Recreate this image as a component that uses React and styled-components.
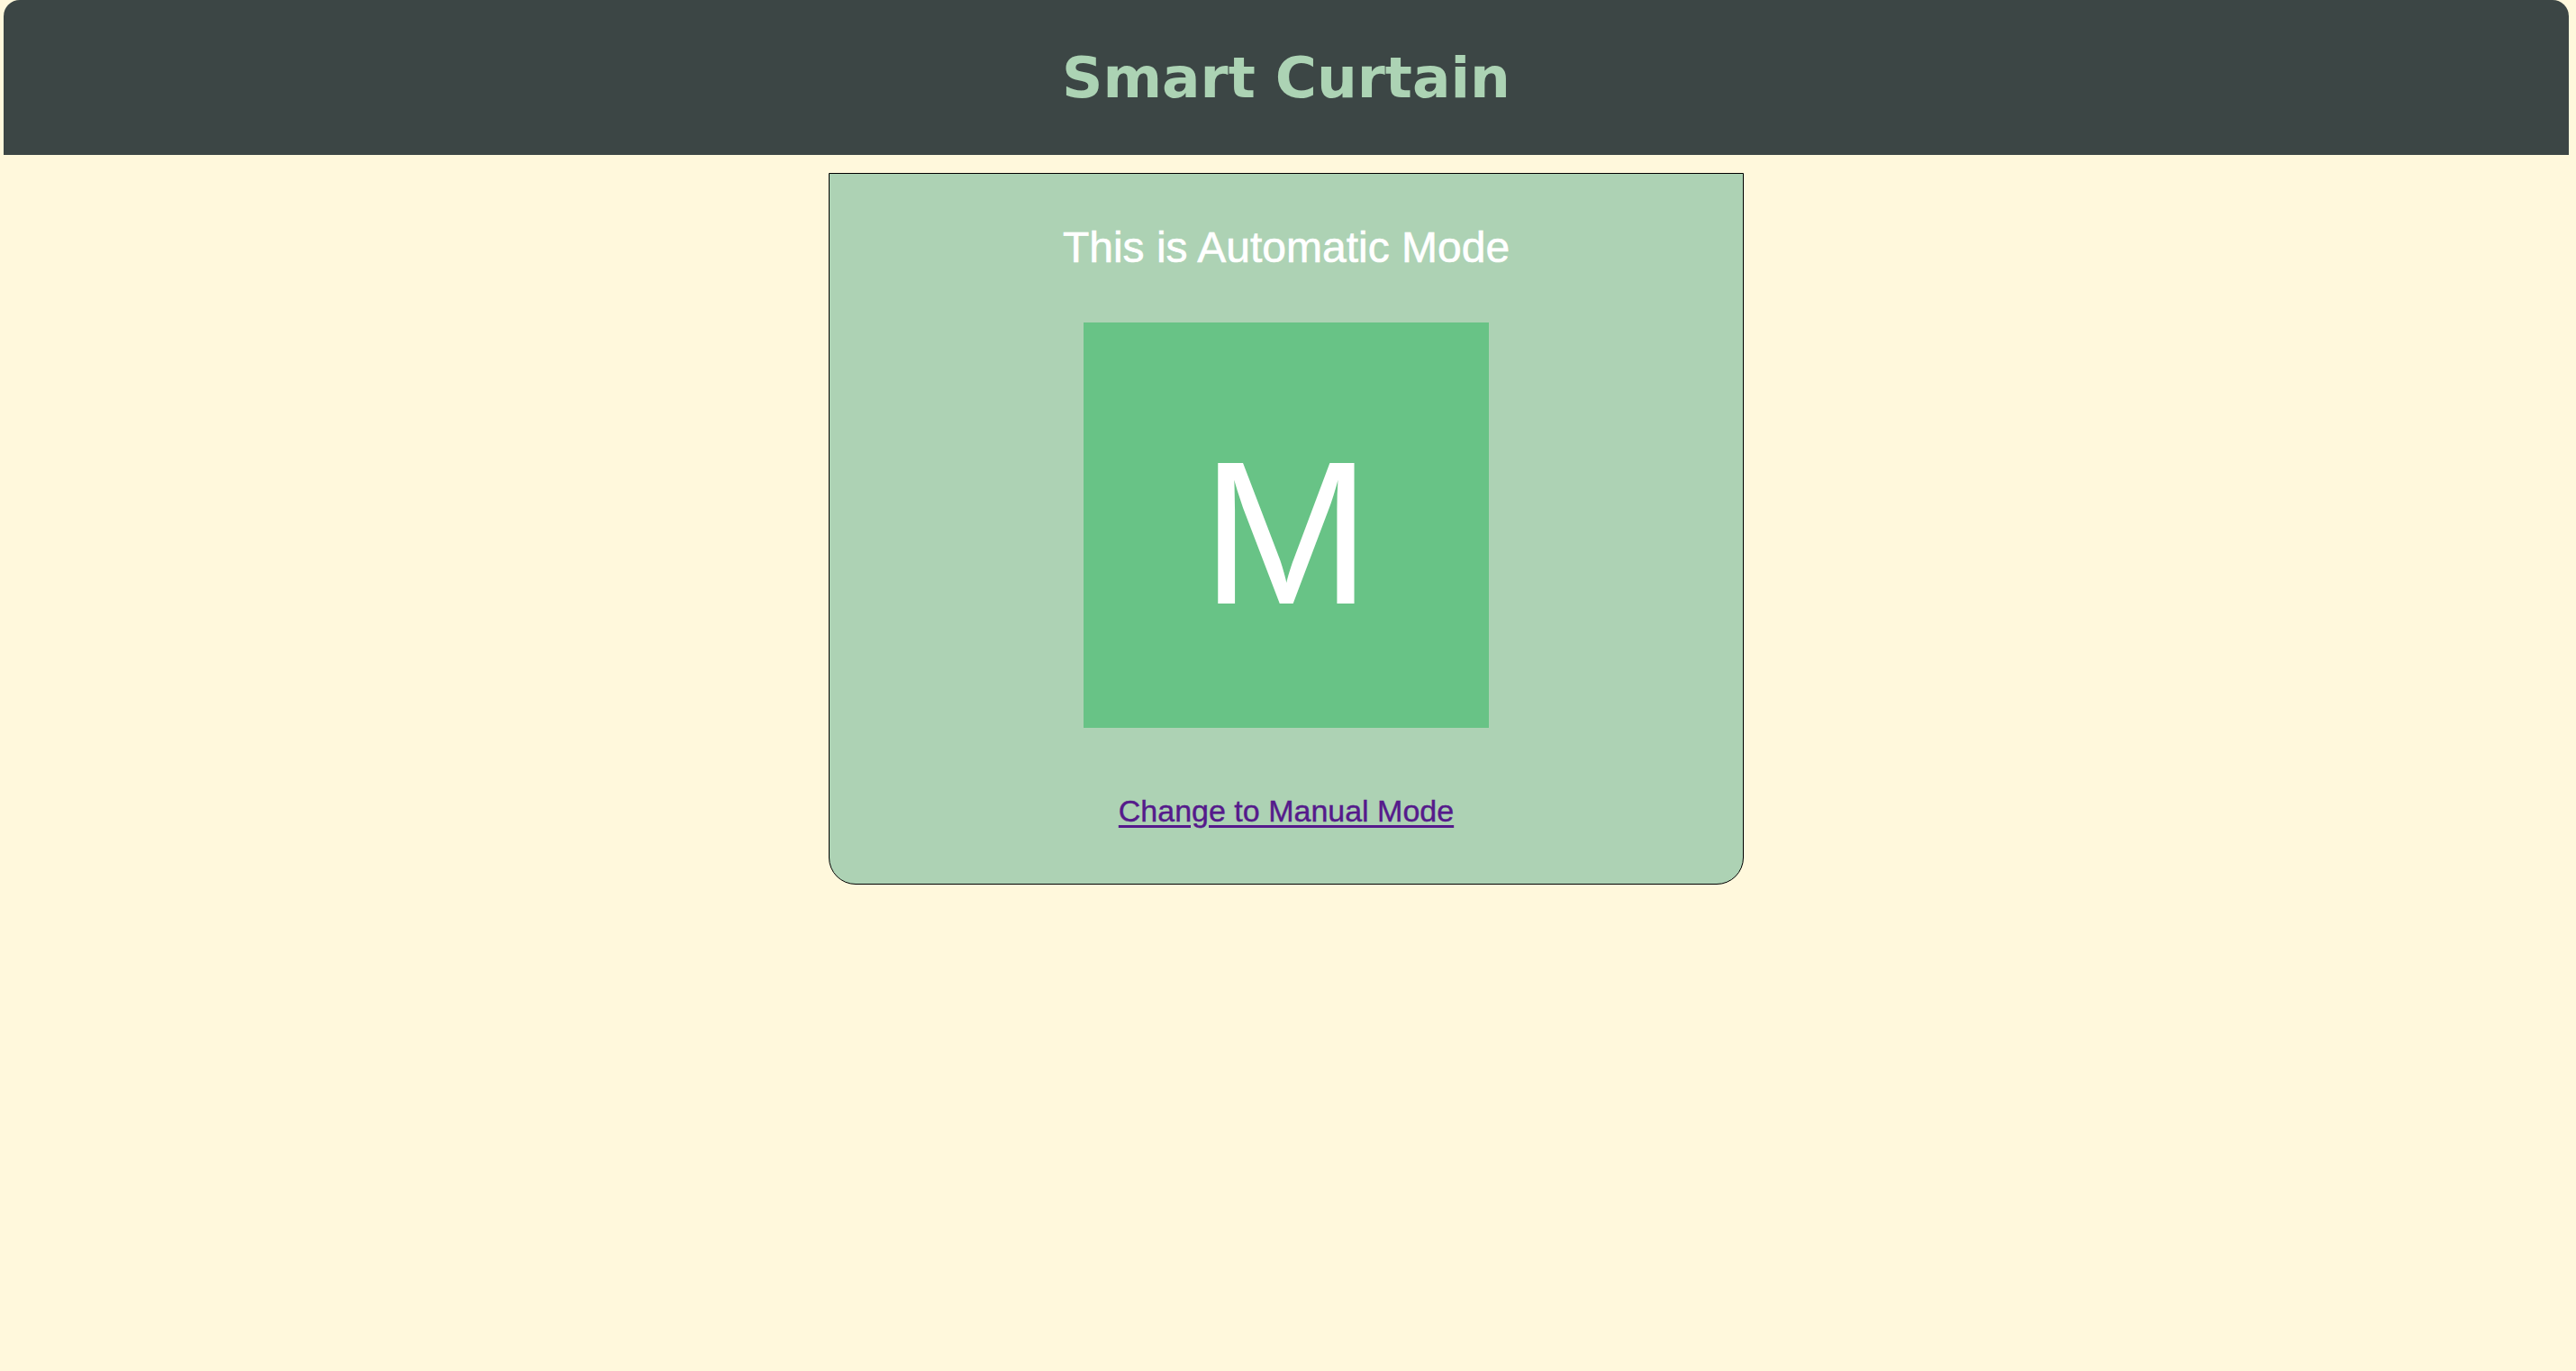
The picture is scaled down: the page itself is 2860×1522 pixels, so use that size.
import React from 'react';
import styled, { createGlobalStyle } from 'styled-components';

const GlobalStyle = createGlobalStyle`
  html, body {
    margin: 0;
    padding: 0;
    background: #fff8dc;
  }
  body {
    font-family: "Liberation Sans", Arial, sans-serif;
    min-height: 1522px;
  }
`;

const Page = styled.div`
  display: flex;
  flex-direction: column;
  align-items: center;
  margin: 0 8px 0 4px;
`;

const Header = styled.header`
  align-self: stretch;
  height: 172px;
  display: flex;
  align-items: center;
  justify-content: center;
  background: #3c4645;
  border-radius: 18px 18px 0 0;
`;

const Brand = styled.h1`
  margin: 0;
  font-family: "DejaVu Sans", Verdana, sans-serif;
  font-weight: 700;
  font-size: 63px;
  color: #acd3b4;
`;

const Card = styled.section`
  margin-top: 20px;
  width: 1016px;
  box-sizing: border-box;
  display: flex;
  flex-direction: column;
  align-items: center;
  padding: 54px 0 61px;
  background: #add2b4;
  border: 1px solid #000;
  border-radius: 0 0 30px 30px;
`;

const Title = styled.h2`
  margin: 0;
  font-size: 48px;
  font-weight: 400;
  line-height: 56px;
  color: #fff;
  -webkit-text-stroke: 0.6px #fff;
`;

const ModeTile = styled.button`
  margin-top: 55px;
  width: 450px;
  height: 450px;
  display: flex;
  align-items: center;
  justify-content: center;
  padding: 17px 0 0;
  border: none;
  background: ${(p) => p.$color};
  color: #fff;
  font-family: "Liberation Sans", Arial, sans-serif;
  font-size: 226px;
  line-height: 1;
  cursor: pointer;
`;

const SwitchLink = styled.a`
  margin-top: 72px;
  font-size: 34px;
  line-height: 40px;
  color: #551a8b;
  -webkit-text-stroke: 0.4px #551a8b;
  text-decoration: underline;
  text-underline-offset: 4px;
`;

const App = () => {
  return (
    <>
      <GlobalStyle />
      <Page>
        <Header>
          <Brand>Smart Curtain</Brand>
        </Header>
        <Card>
          <Title>This is Automatic Mode</Title>
          <ModeTile $color="#68c386">M</ModeTile>
          <SwitchLink href="#manual">Change to Manual Mode</SwitchLink>
        </Card>
      </Page>
    </>
  );
};

export default App;
